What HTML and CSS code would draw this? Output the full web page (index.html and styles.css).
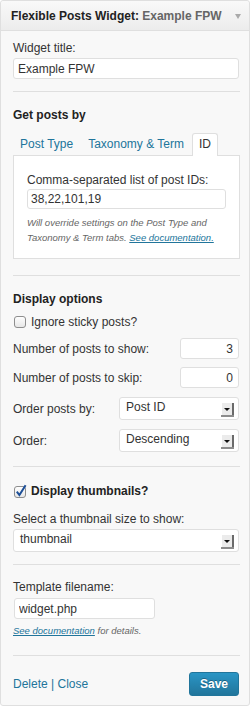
FILE: index.html
```html
<!DOCTYPE html>
<html lang="en">
<head>
    <meta charset="UTF-8">
    <meta name="viewport" content="width=device-width, initial-scale=1.0">
    <title>Flexible Posts Widget</title>
    <link rel="stylesheet" href="styles.css">
</head>
<body>
    <div class="widget">
        <div class="widget-top">
            <h3 class="widget-name">Flexible Posts Widget:<span class="in-title"> Example FPW</span></h3>
            <span class="toggle"></span>
        </div>

        <div class="widget-inside">
            <label class="field-label" for="title">Widget title:</label>
            <input class="text-input title-input" type="text" id="title" value="Example FPW">

            <hr>

            <h4 class="section-head">Get posts by</h4>
            <ul class="tabs">
                <li>Post Type</li>
                <li>Taxonomy &amp; Term</li>
                <li class="active">ID</li>
            </ul>
            <div class="tab-panel">
                <label class="field-label" for="pids">Comma-separated list of post IDs:</label>
                <input class="text-input ids-input" type="text" id="pids" value="38,22,101,19">
                <p class="hint">Will override settings on the Post Type and<br>Taxonomy &amp; Term tabs. <a href="#">See documentation.</a></p>
            </div>

            <hr class="after-panel">

            <h4 class="section-head">Display options</h4>
            <div class="check-row">
                <svg class="checkbox" width="13" height="14" viewBox="0 0 13 14">
                    <defs>
                        <linearGradient id="cbg" x1="0" y1="0" x2="0" y2="1">
                            <stop offset="0" stop-color="#ffffff"/>
                            <stop offset="1" stop-color="#e6e6e6"/>
                        </linearGradient>
                    </defs>
                    <rect x="0.5" y="1.5" width="11" height="11" rx="2.5" fill="url(#cbg)" stroke="#8e8e8e"/>
                </svg>
                <span>Ignore sticky posts?</span>
            </div>

            <div class="opt-row">
                <span>Number of posts to show:</span>
                <input class="text-input num-input" type="text" value="3">
            </div>
            <div class="opt-row">
                <span>Number of posts to skip:</span>
                <input class="text-input num-input" type="text" value="0">
            </div>
            <div class="opt-row select-row">
                <span>Order posts by:</span>
                <div class="fake-select short">
                    <span class="select-value">Post ID</span>
                    <svg class="select-arrow" width="13" height="14" viewBox="0 0 13 14">
                        <rect x="0" y="0" width="13" height="14" fill="#ebebeb"/>
                        <rect x="0" y="0" width="1" height="14" fill="#ffffff"/>
                        <rect x="11" y="0" width="2" height="14" fill="#6a6a6a"/>
                        <rect x="0" y="12" width="13" height="2" fill="#8c8c8c"/>
                        <path d="M3 5h6l-3 3z" fill="#111"/>
                    </svg>
                </div>
            </div>
            <div class="opt-row select-row">
                <span>Order:</span>
                <div class="fake-select short">
                    <span class="select-value">Descending</span>
                    <svg class="select-arrow" width="13" height="14" viewBox="0 0 13 14">
                        <rect x="0" y="0" width="13" height="14" fill="#ebebeb"/>
                        <rect x="0" y="0" width="1" height="14" fill="#ffffff"/>
                        <rect x="11" y="0" width="2" height="14" fill="#6a6a6a"/>
                        <rect x="0" y="12" width="13" height="2" fill="#8c8c8c"/>
                        <path d="M3 5h6l-3 3z" fill="#111"/>
                    </svg>
                </div>
            </div>

            <hr class="after-order">

            <div class="check-row thumbs-row">
                <svg class="checkbox" width="13" height="15" viewBox="0 0 13 15">
                    <defs>
                        <linearGradient id="cbg2" x1="0" y1="0" x2="0" y2="1">
                            <stop offset="0" stop-color="#ffffff"/>
                            <stop offset="1" stop-color="#e6e6e6"/>
                        </linearGradient>
                    </defs>
                    <rect x="0.5" y="2.5" width="11" height="11" rx="2.5" fill="url(#cbg2)" stroke="#8e8e8e"/>
                    <path d="M2.8 7.6 L5.4 11 L11.6 1.2" fill="none" stroke="#1d4f97" stroke-width="2"/>
                </svg>
                <strong>Display thumbnails?</strong>
            </div>

            <label class="field-label thumb-label">Select a thumbnail size to show:</label>
            <div class="fake-select wide">
                <span class="select-value">thumbnail</span>
                <svg class="select-arrow" width="13" height="14" viewBox="0 0 13 14">
                    <rect x="0" y="0" width="13" height="14" fill="#ebebeb"/>
                    <rect x="0" y="0" width="1" height="14" fill="#ffffff"/>
                    <rect x="11" y="0" width="2" height="14" fill="#6a6a6a"/>
                    <rect x="0" y="12" width="13" height="2" fill="#8c8c8c"/>
                    <path d="M3 5h6l-3 3z" fill="#111"/>
                </svg>
            </div>

            <hr class="after-thumb">

            <label class="field-label template-label" for="template">Template filename:</label>
            <input class="text-input template-input" type="text" id="template" value="widget.php">
            <p class="hint template-hint"><a href="#">See documentation</a> for details.</p>

            <hr class="after-template">

            <div class="widget-control">
                <div class="control-links">
                    <a href="#">Delete</a> | <a href="#">Close</a>
                </div>
                <button class="save-btn" type="button">Save</button>
            </div>
        </div>
    </div>
</body>
</html>
```

FILE: styles.css
```css
* {
    box-sizing: border-box;
}
body {
    margin: 0;
    background: #fff;
    font-family: "Liberation Sans", Arial, sans-serif;
    font-size: 12px;
    color: #333;
}
a {
    color: #21759b;
}
.widget {
    width: 250px;
    border: 1px solid #dfdfdf;
    border-radius: 3px;
    background: #f8f8f8;
}
.widget-top {
    height: 29px;
    display: flex;
    align-items: center;
    justify-content: space-between;
    padding: 0 8px 0 10px;
    border-bottom: 1px solid #dfdfdf;
    border-radius: 3px 3px 0 0;
    background: linear-gradient(#f9f9f9, #ececec);
    box-sizing: content-box;
}
.widget-name {
    margin: 0;
    font-size: 12px;
    font-weight: bold;
    color: #222;
    white-space: nowrap;
}
.in-title {
    color: #666;
}
.toggle {
    width: 0;
    height: 0;
    border-left: 3.5px solid transparent;
    border-right: 3.5px solid transparent;
    border-top: 5px solid #aaa;
    margin-top: 2px;
}
.widget-inside {
    padding: 9px 9px 0 12px;
}
.field-label {
    display: block;
    line-height: 16px;
}
.text-input {
    display: block;
    height: 21px;
    padding: 0 4px;
    border: 1px solid #dfdfdf;
    border-radius: 3px;
    background: #fff;
    font-family: inherit;
    font-size: 12px;
    color: #333;
}
.title-input {
    width: 226px;
    margin-top: 2px;
}
hr {
    margin: 12px 0 0;
    height: 0;
    border: 0;
    border-top: 1px solid #dfdfdf;
}
.section-head {
    margin: 15px 0 0;
    font-size: 12px;
    line-height: 16px;
    color: #222;
}
.tabs {
    display: flex;
    margin: 10px 0 0;
    padding: 0;
    list-style: none;
    height: 22px;
}
.tabs li {
    height: 22px;
    margin-right: 1px;
    padding: 0 6px;
    line-height: 21px;
    border: 1px solid transparent;
    border-bottom: 0;
    border-radius: 3px 3px 0 0;
    color: #21759b;
}
.tabs li.active {
    position: relative;
    z-index: 1;
    height: 23px;
    background: #fff;
    border-color: #dfdfdf;
    color: #333;
}
.tab-panel {
    border: 1px solid #dfdfdf;
    background: #fff;
    padding: 16px 13px 13px;
}
.ids-input {
    width: 199px;
    height: 20px;
    margin-top: 1px;
    padding: 0 3px;
}
.hint {
    margin: 6px 0 0;
    font-size: 9.5px;
    line-height: 15px;
    font-style: italic;
    color: #666;
}
.after-panel {
    margin-top: 16px;
}
.check-row {
    display: flex;
    align-items: center;
    gap: 4px;
    margin-top: 7px;
    line-height: 16px;
}
.checkbox {
    margin-left: 1px;
}
.opt-row {
    display: flex;
    align-items: center;
    justify-content: space-between;
    margin: 8px 1px 0 0;
}
.select-row {
    margin-top: 9px;
}
.num-input {
    width: 59px;
    text-align: right;
    padding-right: 5px;
}
.fake-select {
    display: flex;
    align-items: center;
    justify-content: space-between;
    height: 23px;
    padding: 0 4px 0 6px;
    border: 1px solid #dfdfdf;
    border-radius: 3px;
    background: #fff;
}
.fake-select.short {
    width: 120px;
}
.fake-select.wide {
    width: 226px;
    margin-top: 2px;
}
.select-value {
    margin-top: -3px;
}
.select-arrow {
    margin-top: 3px;
}
.after-order {
    margin-top: 14px;
}
.thumbs-row {
    margin-top: 16px;
    color: #222;
}
.thumb-label {
    margin-top: 12px;
}
.template-label {
    margin-top: 14px;
}
.template-input {
    width: 141px;
    margin: 3px 0 0 1px;
}
.template-hint {
    margin-top: 4px;
}
.after-template {
    margin-top: 17px;
}
.widget-control {
    display: flex;
    align-items: center;
    justify-content: space-between;
    padding: 16px 1px 9px 0;
}
.control-links {
    color: #21759b;
}
.control-links a {
    text-decoration: none;
}
.save-btn {
    height: 24px;
    padding: 0 10px;
    border: 1px solid #21759b;
    border-radius: 3px;
    background: linear-gradient(#2a95c5, #21759b);
    color: #fff;
    font-family: inherit;
    font-size: 12px;
    font-weight: bold;
    text-shadow: 0 -1px 0 rgba(0, 0, 0, 0.3);
}
```
